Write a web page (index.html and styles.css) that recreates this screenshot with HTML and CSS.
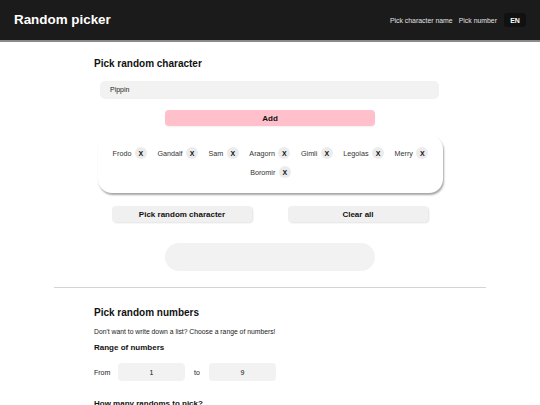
FILE: index.html
```html
<!DOCTYPE html>
<html lang="en">
<head>
<meta charset="utf-8">
<title>Random picker</title>
<link rel="stylesheet" href="styles.css">
</head>
<body>
<header class="topbar">
  <div class="brand">Random picker</div>
  <nav class="nav">
    <a class="nav-link">Pick character name</a>
    <a class="nav-link">Pick number</a>
    <button class="lang">EN</button>
  </nav>
</header>
<main class="main">
  <section class="section">
    <h2 class="title">Pick random character</h2>
    <div class="name-input">Pippin</div>
    <div class="center"><button class="add-btn">Add</button></div>
    <div class="card">
      <div class="chip"><span>Frodo</span><span class="x">X</span></div>
      <div class="chip"><span>Gandalf</span><span class="x">X</span></div>
      <div class="chip"><span>Sam</span><span class="x">X</span></div>
      <div class="chip"><span>Aragorn</span><span class="x">X</span></div>
      <div class="chip"><span>Gimli</span><span class="x">X</span></div>
      <div class="chip"><span>Legolas</span><span class="x">X</span></div>
      <div class="chip"><span>Merry</span><span class="x">X</span></div>
      <div class="chip"><span>Boromir</span><span class="x">X</span></div>
    </div>
    <div class="actions">
      <button class="act-btn">Pick random character</button>
      <button class="act-btn">Clear all</button>
    </div>
    <div class="center"><div class="result"></div></div>
  </section>
  <hr class="divider">
  <section class="section">
    <h2 class="title">Pick random numbers</h2>
    <p class="desc">Don't want to write down a list? Choose a range of numbers!</p>
    <h3 class="sub">Range of numbers</h3>
    <div class="range">
      <span class="lbl">From</span>
      <div class="num">1</div>
      <span class="lbl to">to</span>
      <div class="num">9</div>
    </div>
    <h3 class="sub how">How many randoms to pick?</h3>
  </section>
</main>
</body>
</html>
```

FILE: styles.css
```css
* { box-sizing: border-box; }
html, body { margin: 0; padding: 0; }
body {
  font-family: "Liberation Sans", Arial, sans-serif;
  color: #111;
  background: #fff;
  width: 540px;
  overflow: hidden;
}
.topbar {
  height: 42px;
  background: #1b1b1b;
  border-bottom: 2px solid #8a8a8a;
  display: flex;
  align-items: center;
  justify-content: space-between;
  padding: 0 14px 0 14px;
}
.brand {
  color: #fff;
  font-weight: bold;
  font-size: 13.4px;
  margin-top: -1px;
}
.nav {
  display: flex;
  align-items: center;
  gap: 6px;
}
.nav-link {
  color: #e2e2e2;
  font-size: 6.9px;
}
.lang {
  margin-left: 1px;
  background: #111;
  color: #fff;
  border: none;
  border-radius: 3px;
  font-family: inherit;
  font-weight: bold;
  font-size: 7px;
  width: 22px;
  height: 14px;
  padding: 0;
}
.main { padding-top: 15px; }
.section {
  width: 352px;
  margin: 0 auto;
}
.title {
  font-size: 10px;
  font-weight: bold;
  margin: 0 0 10px 0;
  line-height: 14px;
}
.name-input {
  margin: 0 7px 0 6px;
  height: 18px;
  background: #f2f2f2;
  border-radius: 5px;
  font-size: 7px;
  line-height: 18px;
  padding-left: 10px;
  color: #222;
}
.center { display: flex; justify-content: center; }
.add-btn {
  margin-top: 11px;
  width: 210px;
  height: 16px;
  background: #ffc0cb;
  border: none;
  border-radius: 4px;
  font-family: inherit;
  font-weight: bold;
  font-size: 8px;
  color: #111;
  box-shadow: 0 1px 2px rgba(0,0,0,0.06);
}
.card {
  margin: 9px 3px 0 4px;
  height: 58px;
  border-radius: 14px;
  box-shadow: 1px 2px 2px rgba(0,0,0,0.35);
  display: flex;
  flex-wrap: wrap;
  justify-content: center;
  align-content: flex-start;
  column-gap: 10.5px;
  row-gap: 7px;
  padding: 12px 10px 0 10px;
}
.chip {
  display: flex;
  align-items: center;
  gap: 3.5px;
  font-size: 7.2px;
  color: #333;
  height: 12px;
}
.x {
  width: 12px;
  height: 12px;
  border-radius: 50%;
  background: #ececec;
  display: flex;
  align-items: center;
  justify-content: center;
  font-weight: bold;
  font-size: 7px;
  color: #111;
}
.actions {
  display: flex;
  justify-content: center;
  gap: 36px;
  margin-top: 13px;
}
.act-btn {
  width: 140px;
  height: 16px;
  background: #f0f0f0;
  border: none;
  border-radius: 4px;
  font-family: inherit;
  font-weight: bold;
  font-size: 8px;
  color: #111;
  box-shadow: 1px 1px 2px rgba(0,0,0,0.12);
}
.result {
  margin-top: 21px;
  width: 210px;
  height: 28px;
  border-radius: 14px;
  background: #f2f2f2;
}
.divider {
  width: 432px;
  margin: 16px auto 18px auto;
  border: none;
  border-top: 1px solid #d4d4d4;
}
.desc {
  font-size: 6.8px;
  margin: -2px 0 8px 0;
  color: #222;
}
.sub {
  font-size: 8px;
  font-weight: bold;
  margin: 0 0 11px 0;
}
.range {
  display: flex;
  align-items: center;
  font-size: 7px;
}
.lbl { width: 24px; color: #222; }
.lbl.to { padding-left: 9px; width: 24px; }
.num {
  width: 67px;
  height: 18px;
  background: #f2f2f2;
  border-radius: 4px;
  display: flex;
  align-items: center;
  justify-content: center;
}
.how { margin-top: 18px; }
```
